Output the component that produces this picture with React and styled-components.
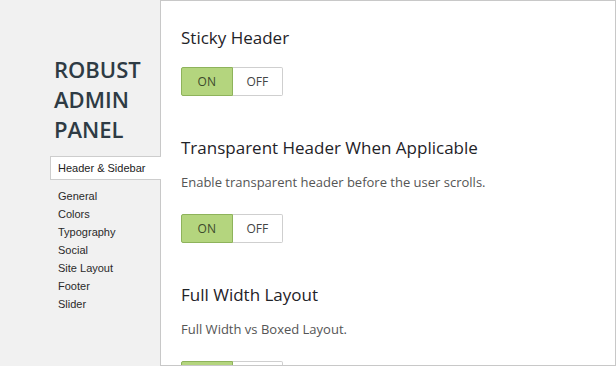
import styled, { createGlobalStyle } from 'styled-components';

const GlobalStyle = createGlobalStyle`
    html, body {
        margin: 0;
        padding: 0;
        background: #f1f1f1;
    }
    body {
        font-family: "Open Sans", "Liberation Sans", sans-serif;
    }
`;

const Page = styled.div`
    display: grid;
    grid-template-columns: 160px 1fr;
    width: 616px;
    height: 366px;
    overflow: hidden;
    background: #f1f1f1;
`;

const Sidebar = styled.aside`
    padding-top: 54px;
`;

const Brand = styled.h1`
    margin: 0 0 12px 54px;
    font-family: "Open Sans", sans-serif;
    font-weight: 600;
    font-size: 22px;
    line-height: 30px;
    color: #2e3b44;
`;

const ActiveTab = styled.div`
    position: relative;
    z-index: 1;
    margin-left: 50px;
    margin-right: -1px;
    height: 22px;
    padding-left: 7px;
    border: 1px solid #cdcdcd;
    border-right: none;
    background: #fff;
    font-family: "Liberation Sans", Arial, sans-serif;
    font-size: 11px;
    line-height: 22px;
    color: #222;
`;

const NavList = styled.ul`
    list-style: none;
    margin: 0;
    padding: 7px 0 0 58px;
`;

const NavItem = styled.li`
    font-family: "Liberation Sans", Arial, sans-serif;
    font-size: 11px;
    line-height: 18px;
    color: #2a2a2a;
`;

const Panel = styled.main`
    background: #fff;
    border: 1px solid #c8c8c8;
    padding: 25px 20px 0 20px;
    overflow: hidden;
`;

const Section = styled.section`
    margin-bottom: 40px;
`;

const Heading = styled.h2`
    margin: 0;
    font-weight: 400;
    font-size: 17px;
    line-height: 24px;
    color: #1f2328;
`;

const Description = styled.p`
    margin: 12px 0 0;
    font-size: 13px;
    line-height: 20px;
    color: #555;
`;

const Toggle = styled.div`
    display: flex;
    width: 102px;
    margin-top: ${p => (p.$afterText ? '22px' : '17px')};
`;

const ToggleButton = styled.div`
    flex: 1;
    height: 27px;
    display: flex;
    align-items: center;
    justify-content: center;
    font-size: 12px;
    color: ${p => (p.$active ? '#3d4a2c' : '#444')};
    background: ${p => (p.$active ? '#b4d57e' : '#fff')};
    border: 1px solid ${p => (p.$active ? '#8eb35b' : '#cfcfcf')};
    border-radius: ${p => (p.$first ? '2px 0 0 2px' : '0 2px 2px 0')};
    ${p => !p.$first && 'border-left: none;'}
`;

const navItems = ['General', 'Colors', 'Typography', 'Social', 'Site Layout', 'Footer', 'Slider'];

const settings = [
    { title: 'Sticky Header' },
    { title: 'Transparent Header When Applicable', desc: 'Enable transparent header before the user scrolls.' },
    { title: 'Full Width Layout', desc: 'Full Width vs Boxed Layout.' },
];

const App = () => {
    return (<>
        <GlobalStyle />
        <Page>
            <Sidebar>
                <Brand>ROBUST<br />ADMIN<br />PANEL</Brand>
                <ActiveTab>Header &amp; Sidebar</ActiveTab>
                <NavList>
                    {navItems.map(item => <NavItem key={item}>{item}</NavItem>)}
                </NavList>
            </Sidebar>
            <Panel>
                {settings.map(s => (
                    <Section key={s.title}>
                        <Heading>{s.title}</Heading>
                        {s.desc && <Description>{s.desc}</Description>}
                        <Toggle $afterText={!!s.desc}>
                            <ToggleButton $active $first>ON</ToggleButton>
                            <ToggleButton>OFF</ToggleButton>
                        </Toggle>
                    </Section>
                ))}
            </Panel>
        </Page>
    </>);
};

export default App;
